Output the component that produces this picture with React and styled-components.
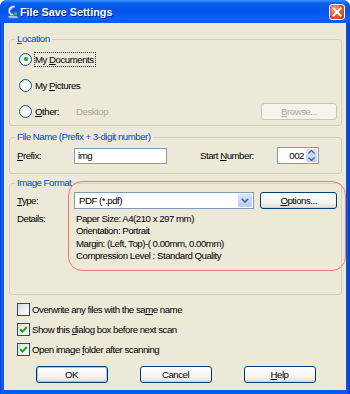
import React from "react";
import styled, { createGlobalStyle } from "styled-components";

const Global = createGlobalStyle`
  html, body { margin: 0; padding: 0; }
  body {
    width: 350px;
    height: 394px;
    overflow: hidden;
    font-family: "Liberation Sans", Arial, sans-serif;
    font-size: 9.7px;
    letter-spacing: -0.5px;
    color: #000;
  }
`;

export default function App() {
  return (
    <>
      <Global />
      <Window>
        <TitleBar>
          <AppIcon />
          <Title>File Save Settings</Title>
          <CloseButton>
            <svg width="10" height="10" viewBox="0 0 10 10">
              <path d="M1.5 1.5 L8.5 8.5 M8.5 1.5 L1.5 8.5" stroke="#fff" strokeWidth="2" strokeLinecap="square" />
            </svg>
          </CloseButton>
        </TitleBar>
        <Client>
          <Group>
            <Legend><u>L</u>ocation</Legend>
            <RadioRow>
              <Radio checked />
              <Focused>My <u>D</u>ocuments</Focused>
            </RadioRow>
            <RadioRow>
              <Radio />
              <span>My <u>P</u>ictures</span>
            </RadioRow>
            <RadioRow>
              <Radio />
              <Label $w={41}><u>O</u>ther:</Label>
              <Muted>Desktop</Muted>
              <Button disabled width={76}><u>B</u>rowse...</Button>
            </RadioRow>
          </Group>

          <Group $gap={5}>
            <Legend>File Name (Prefix + 3-digit number)</Legend>
            <FieldRow $top={3} $bottom={8}>
              <Label $w={57}><u>P</u>refix:</Label>
              <TextBox style={{ width: 93 }}>img</TextBox>
              <Label $w={77} $ml={33}>Start <u>N</u>umber:</Label>
              <SpinBox>
                <SpinValue>002</SpinValue>
                <SpinButtons>
                  <svg width="7" height="4" viewBox="0 0 7 4"><path d="M0.5 3.5 L3.5 0.5 L6.5 3.5" fill="none" stroke="#4D6185" strokeWidth="1.3" /></svg>
                  <svg width="7" height="4" viewBox="0 0 7 4"><path d="M0.5 0.5 L3.5 3.5 L6.5 0.5" fill="none" stroke="#4D6185" strokeWidth="1.3" /></svg>
                </SpinButtons>
              </SpinBox>
            </FieldRow>
          </Group>

          <Group $gap={3}>
            <Legend>Image Format</Legend>
            <FieldRow $top={2} $bottom={0}>
              <Label $w={57}><u>T</u>ype:</Label>
              <Combo>
                <ComboValue>PDF (*.pdf)</ComboValue>
                <ComboButton>
                  <svg width="8" height="5" viewBox="0 0 8 5"><path d="M0.8 0.8 L4 4 L7.2 0.8" fill="none" stroke="#4D6185" strokeWidth="1.6" /></svg>
                </ComboButton>
              </Combo>
              <Button width={77} $ml={6}><u>O</u>ptions...</Button>
            </FieldRow>
            <DetailsRow>
              <Label $w={59}>Details:</Label>
              <DetailLines>
                <div>Paper Size: A4(210 x 297 mm)</div>
                <div>Orientation: Portrait</div>
                <div>Margin: (Left, Top)-( 0.00mm, 0.00mm)</div>
                <div>Compression Level : Standard Quality</div>
              </DetailLines>
            </DetailsRow>
          </Group>

          <CheckList>
            <CheckRow>
              <Check />
              <span>Overwrite any files with the sa<u>m</u>e name</span>
            </CheckRow>
            <CheckRow>
              <Check checked />
              <span>Show this <u>d</u>ialog box before next scan</span>
            </CheckRow>
            <CheckRow>
              <Check checked />
              <span>Open image <u>f</u>older after scanning</span>
            </CheckRow>
          </CheckList>

          <ButtonBar>
            <Button width={72} $default>OK</Button>
            <Button width={72}>Cancel</Button>
            <Button width={72}><u>H</u>elp</Button>
          </ButtonBar>

          <Highlight />
        </Client>
      </Window>
    </>
  );
}

function AppIcon() {
  return (
    <IconBox>
      <svg width="13" height="15" viewBox="0 0 13 15">
        <path d="M9 1.5 C4 1.5 1.5 4.5 2.5 8.5 C3.2 11 5.5 12 8 11.5 L6.8 9.6 C5.3 9.8 4.5 9 4.4 7.6 C4.3 5.4 6 3.8 8.6 3.7 Z" fill="#E8EEF8" stroke="#6E86B0" strokeWidth="0.8" />
        <path d="M2 12 L11 12 L12 14 L3 14 Z" fill="#C9D3E2" stroke="#6E86B0" strokeWidth="0.6" />
        <circle cx="9.6" cy="9.6" r="1.6" fill="#3DBB3D" />
      </svg>
    </IconBox>
  );
}

function Radio({ checked }) {
  return (
    <RadioCircle>
      {checked && <RadioDot />}
    </RadioCircle>
  );
}

function Check({ checked }) {
  return (
    <CheckBox>
      {checked && (
        <svg width="9" height="9" viewBox="0 0 9 9">
          <path d="M1.2 4.2 L3.5 6.6 L7.8 2" fill="none" stroke="#21A121" strokeWidth="2" />
        </svg>
      )}
    </CheckBox>
  );
}

const Window = styled.div`
  width: 350px;
  height: 394px;
  display: flex;
  flex-direction: column;
  background: linear-gradient(90deg, #0A3BC7 0, #1662EE 2px, #0A5AE8 3px, #0A5AE8 calc(100% - 4px), #0B3CC9 100%);
  border-radius: 7px 7px 0 0;
  overflow: hidden;
`;

const TitleBar = styled.div`
  height: 23px;
  flex: none;
  display: flex;
  align-items: center;
  padding: 0 5px 0 5px;
  background: linear-gradient(180deg, #3D95FF 0%, #0A5FEF 14%, #0055E8 45%, #0462F6 80%, #0A5AE8 100%);
`;

const IconBox = styled.div`
  width: 14px;
  height: 16px;
  display: flex;
  align-items: center;
  justify-content: center;
`;

const Title = styled.div`
  flex: 1;
  margin-left: 1px;
  color: #fff;
  font-weight: bold;
  font-size: 10.8px;
  letter-spacing: 0;
  text-shadow: 1px 1px 0 #0A1E8C;
`;

const CloseButton = styled.div`
  width: 16px;
  height: 16px;
  box-sizing: border-box;
  border: 1px solid #fff;
  border-radius: 3px;
  background: radial-gradient(circle at 35% 30%, #F49A7A 0%, #E0562C 55%, #C23A15 100%);
  display: flex;
  align-items: center;
  justify-content: center;
`;

const Client = styled.div`
  position: relative;
  flex: 1;
  margin: 0 4px 4px 4px;
  background: #ECE9D8;
  padding: 10px 4px 0 5px;
  display: flex;
  flex-direction: column;
`;

const Group = styled.fieldset`
  margin: ${(p) => p.$gap || 0}px 0 0 0;
  padding: 1px 4px 1px 7px;
  border: 1px solid #D0D0BF;
  border-radius: 3px;
  min-width: 0;
`;

const Legend = styled.legend`
  padding: 0 2px;
  margin-left: -2px;
  color: #0046D5;
  line-height: 12px;
`;

const RadioRow = styled.div`
  height: 26px;
  display: flex;
  align-items: center;
`;

const RadioCircle = styled.div`
  width: 11px;
  height: 11px;
  margin: 0 3px 0 2px;
  border: 1px solid #1C5180;
  border-radius: 50%;
  background: radial-gradient(circle at 60% 65%, #FFFFFF 30%, #E3E1D8 100%);
  display: flex;
  align-items: center;
  justify-content: center;
  flex: none;
`;

const RadioDot = styled.div`
  width: 4px;
  height: 4px;
  border-radius: 50%;
  background: #2CAA2C;
  box-shadow: 0 0 1px #4CC44C;
`;

const Focused = styled.span`
  outline: 1px dotted #333;
  outline-offset: 0;
  padding: 1px 1px 1px 0;
`;

const Muted = styled.span`
  color: #ACA899;
  flex: 1;
`;

const Button = styled.button.attrs({ type: "button" })`
  width: ${(p) => p.width}px;
  height: 17px;
  margin-left: ${(p) => p.$ml || 0}px;
  padding: 0;
  box-sizing: border-box;
  font-family: inherit;
  font-size: 9.7px;
  letter-spacing: -0.5px;
  color: #000;
  border: 1px solid #003C74;
  border-radius: 3px;
  background: linear-gradient(180deg, #FFFFFF 0%, #F6F5F0 60%, #E3E0D3 100%);
  box-shadow: ${(p) => (p.$default ? "inset 0 0 0 1px #A9C0EC" : "inset 0 -1px 0 #D6D0C5")};

  &:disabled {
    color: #ACA899;
    border-color: #C9C7BA;
    background: #F5F4EA;
    box-shadow: none;
  }
`;

const FieldRow = styled.div`
  display: flex;
  align-items: center;
  height: 17px;
  margin: ${(p) => p.$top}px 0 ${(p) => p.$bottom}px 0;
`;

const Label = styled.span`
  width: ${(p) => p.$w}px;
  margin-left: ${(p) => p.$ml || 0}px;
  flex: none;
`;

const TextBox = styled.div`
  height: 16px;
  box-sizing: border-box;
  border: 1px solid #7F9DB9;
  background: #fff;
  padding: 0 3px;
  line-height: 14px;
`;

const SpinBox = styled.div`
  width: 42px;
  height: 17px;
  box-sizing: border-box;
  border: 1px solid #7F9DB9;
  background: #fff;
  display: flex;
  padding: 1px;
`;

const SpinValue = styled.div`
  flex: 1;
  text-align: right;
  padding-right: 2px;
  line-height: 13px;
`;

const SpinButtons = styled.div`
  width: 11px;
  display: flex;
  flex-direction: column;
  align-items: center;
  justify-content: space-around;
  background: linear-gradient(180deg, #D8E4FC 0%, #BBCDF7 100%);
  border-radius: 2px;
`;

const Combo = styled.div`
  width: 181px;
  height: 17px;
  box-sizing: border-box;
  border: 1px solid #7F9DB9;
  background: #fff;
  display: flex;
  padding: 1px;
`;

const ComboValue = styled.div`
  flex: 1;
  padding-left: 3px;
  line-height: 13px;
`;

const ComboButton = styled.div`
  width: 14px;
  display: flex;
  align-items: center;
  justify-content: center;
  background: linear-gradient(180deg, #D8E4FC 0%, #B6CAF7 100%);
  border-radius: 2px;
`;

const DetailsRow = styled.div`
  display: flex;
  margin: 4px 0 31px 0;
  line-height: 12.3px;
`;

const DetailLines = styled.div`
  display: flex;
  flex-direction: column;
`;

const CheckList = styled.div`
  margin-top: 4px;
  padding-left: 8px;
  display: flex;
  flex-direction: column;
`;

const CheckRow = styled.div`
  height: 20px;
  display: flex;
  align-items: center;
  gap: 2px;
`;

const CheckBox = styled.div`
  width: 11px;
  height: 11px;
  border: 1px solid #1C5180;
  background: linear-gradient(135deg, #DCDBD5 0%, #F5F5F1 60%, #FFFFFF 100%);
  display: flex;
  align-items: center;
  justify-content: center;
  flex: none;
`;

const ButtonBar = styled.div`
  margin-top: 7px;
  display: flex;
  justify-content: center;
  gap: 32px;
`;

const Highlight = styled.div`
  position: absolute;
  left: 64px;
  top: 158px;
  width: 276px;
  height: 88px;
  border: 1.5px solid #EF7A72;
  border-radius: 14px;
  pointer-events: none;
`;
